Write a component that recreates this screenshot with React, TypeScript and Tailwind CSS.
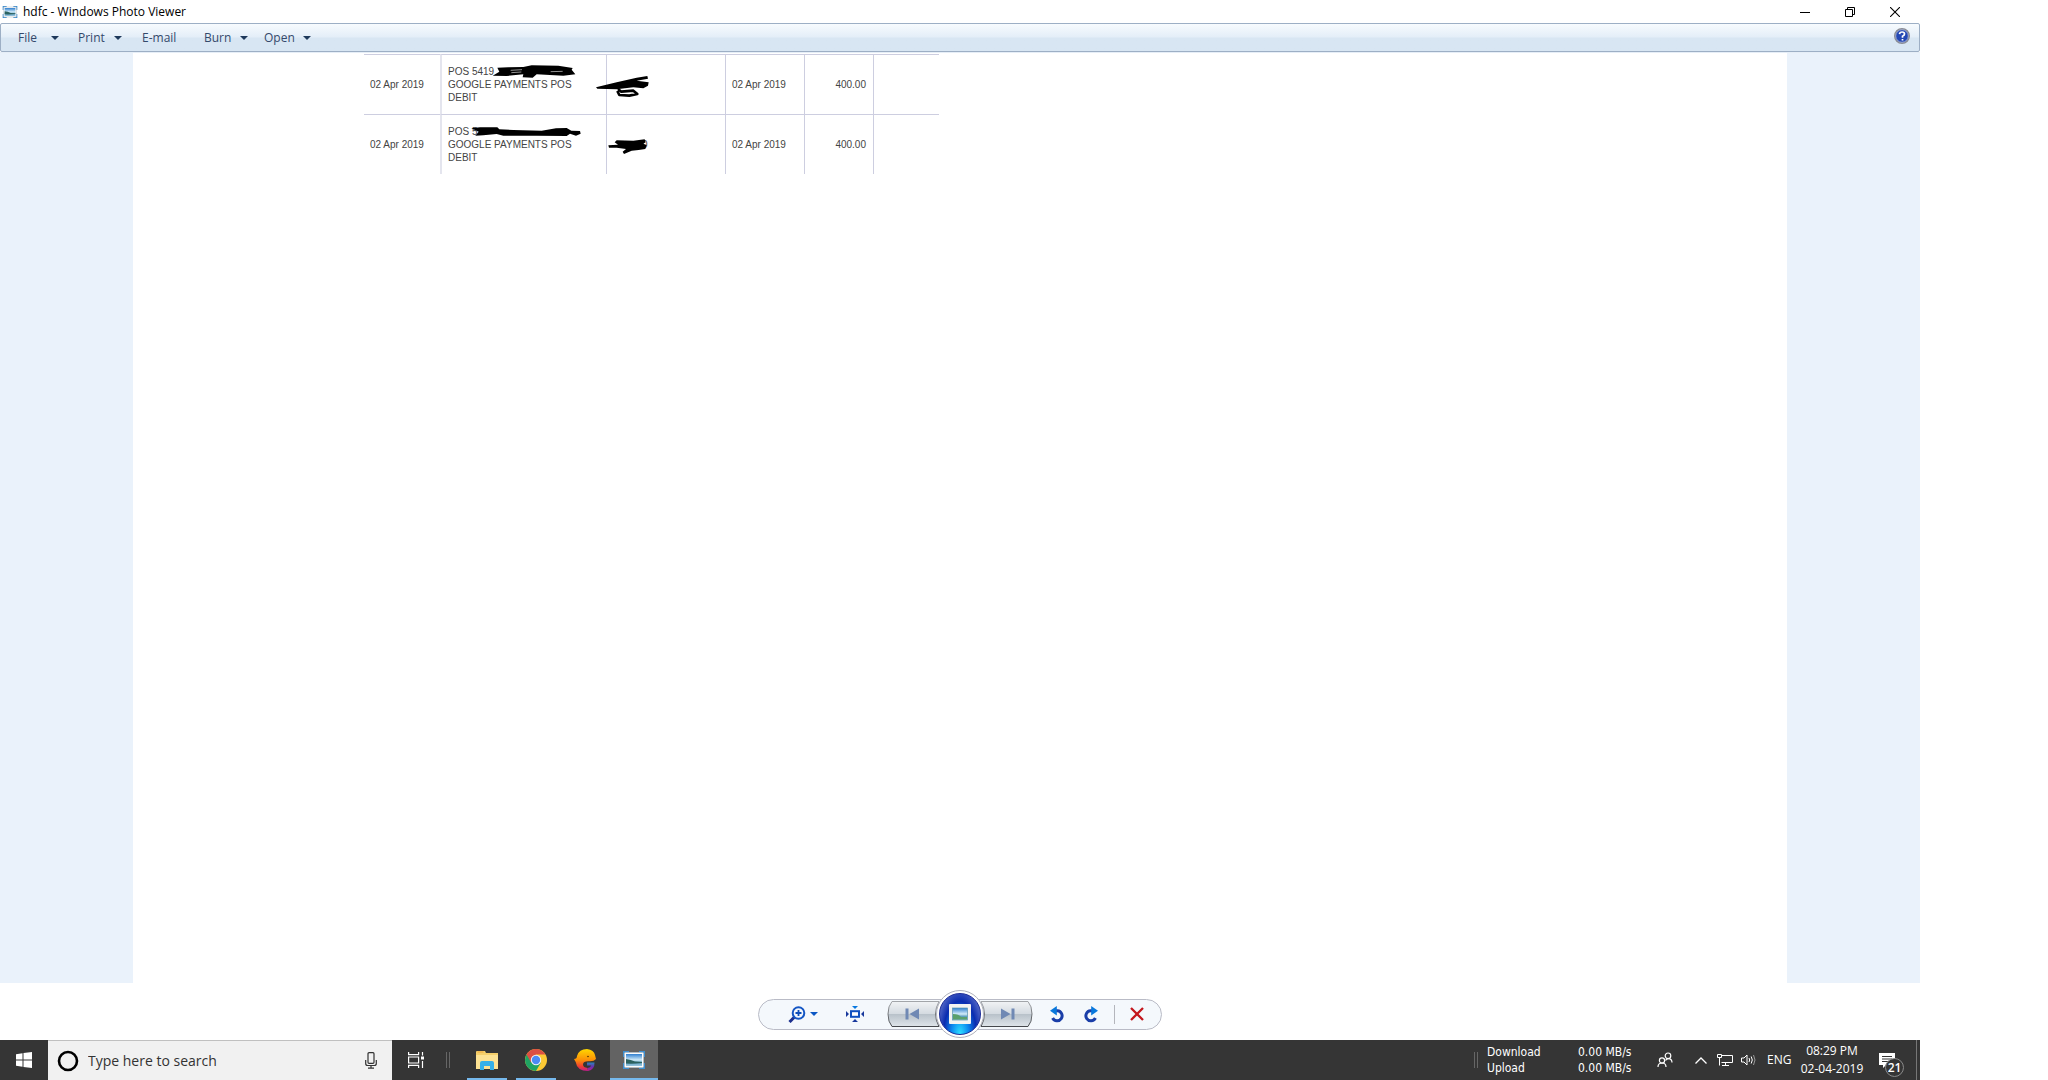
import type { ReactNode } from "react";

const ROWS = [
  {
    id: 1,
    card: "POS 5419",
    amount: "",
    cardMark: (
      <>
        <path d="M442 68 L475 67 L520 66 L545 61 L625 62 L668 69 L665 74 L676 88 L640 92 L560 88 L548 98 L518 97 L520 88 L470 93 L428 92 L448 80 Z" />
        <path d="M482 76 L516 74 M484 83 L514 81 M602 80 L638 79" stroke="#ddd" strokeWidth="2" />
      </>
    ),
    amountMark: (
      <>
        <path d="M738 127 L800 112 L860 98 L892 93 L894 101 L860 107 L896 112 L894 122 L880 130 L850 127 L800 133 L742 131 Z" />
        <path d="M804 132 L814 140 L850 137 L862 147 L838 152 L808 150 L802 138" fill="none" stroke="#000" strokeWidth="8" strokeLinejoin="round" />
      </>
    ),
  },
  {
    id: 2,
    card: "POS 5",
    amount: "0",
    cardMark: (
      <path d="M364 250 L390 247 L442 247 L448 253 L490 255 L575 257 L618 250 L650 249 L664 257 L690 258 L692 266 L678 272 L660 266 L650 273 L560 272 L460 272 L440 267 L400 271 L376 272 L386 260 Z" />
    ),
    amountMark: (
      <path d="M775 301 L804 299 L794 292 L800 286 L850 287 L884 283 L887 292 L880 296 L890 300 L886 312 L866 315 L845 317 L822 327 L818 320 L828 312 L800 308 L777 308 Z" />
    ),
  },
];

function PhotoIcon({ className }: { className: string }) {
  return (
    <svg viewBox="0 0 24 20" className={className} aria-hidden="true">
      <defs>
        <linearGradient id="sky" x1="0" y1="0" x2="0" y2="1">
          <stop offset="0" stopColor="#2f7fd0" />
          <stop offset=".5" stopColor="#d3ecf8" />
          <stop offset=".7" stopColor="#5c9fc0" />
          <stop offset="1" stopColor="#9ac6e0" />
        </linearGradient>
      </defs>
      <path d="M1 1h6v4H5v2H1zM23 1h-6v4h2v2h4zM1 19h6v-4H5v-2H1zM23 19h-6v-4h2v-2h4z" fill="#3f8fd0" />
      <rect x="2.500" y="2.500" width="19" height="15" rx="1" fill="#fbfbfb" stroke="#b4bcc4" strokeWidth=".8" />
      <rect x="4" y="4" width="16" height="12" fill="url(#sky)" />
      <path d="M4 9q5 .5 9 2.500l7 .5v1q-9 1-16 .5z" fill="#2c6260" />
    </svg>
  );
}

function Caret({ color }: { color: string }) {
  return (
    <svg viewBox="0 0 8 4" className="h-1 w-2 shrink-0" aria-hidden="true">
      <path d="M0 0h8L4 4z" fill={color} />
    </svg>
  );
}

function TitleBar() {
  return (
    <header className="flex h-[23px] items-center pl-0.5 text-black">
      <PhotoIcon className="h-[14px] w-4" />
      <h1 className="ml-[5px] grow text-[12px]">hdfc - Windows Photo Viewer</h1>
      <button aria-label="Minimize" className="flex h-5 w-[45px] items-center justify-center">
        <svg viewBox="0 0 10 10" className="size-[10px]"><path d="M0 5.500h10" stroke="#000" /></svg>
      </button>
      <button aria-label="Restore" className="flex h-5 w-[45px] items-center justify-center">
        <svg viewBox="0 0 10 10" className="size-[10px]" fill="none" stroke="#000"><path d="M.5 2.500h7v7h-7zM2.500 2.500v-2h7v7h-2" /></svg>
      </button>
      <button aria-label="Close" className="mr-0.5 flex h-5 w-[46px] items-center justify-center">
        <svg viewBox="0 0 10 10" className="size-[10px]"><path d="M0 0l10 10M10 0L0 10" stroke="#000" strokeWidth="1.100" /></svg>
      </button>
    </header>
  );
}

function MenuButton({ label, caret = true, className }: { label: string; caret?: boolean; className: string }) {
  return (
    <button className={"flex items-center justify-between whitespace-nowrap " + className}>
      {label}
      {caret && <Caret color="#1e395b" />}
    </button>
  );
}

function MenuBar() {
  return (
    <nav className="flex h-[29px] items-center rounded-[2px] border border-[#9dafc5] bg-linear-to-b from-[#f7fbfe] from-0% via-[#e4eef8] via-48% to-[#d8e6f3] to-52% pl-[17px] text-[12px] text-[#34496b]">
      <MenuButton label="File" className="mr-[19px] w-[41px]" />
      <MenuButton label="Print" className="mr-5 w-[44px]" />
      <MenuButton label="E-mail" caret={false} className="mr-[22px] w-10" />
      <MenuButton label="Burn" className="mr-4 w-[44px]" />
      <MenuButton label="Open" className="w-[47px]" />
      <button aria-label="Help" className="mr-[9px] mb-1 ml-auto">
        <svg viewBox="0 0 16 16" className="size-4">
          <circle cx="8" cy="8" r="7.300" fill="#2448b4" stroke="#8b8d94" strokeWidth="1.400" />
          <circle cx="8" cy="8" r="6.300" fill="none" stroke="#c9cede" strokeWidth=".7" />
          <path d="M5.500 6.200Q5.700 4 8.100 4q2.400 0 2.400 2Q10.500 7.300 8.500 8.200V9.700M8.500 11v1.600" fill="none" stroke="#fff" strokeWidth="1.700" />
        </svg>
      </button>
    </nav>
  );
}

function Cell({ className = "", children }: { className?: string; children?: ReactNode }) {
  return <td className={"relative h-[60px] border-t border-[#cdcee0] pr-[7px] pl-[6px] py-0 align-middle " + className}>{children}</td>;
}

function Statement() {
  return (
    <table className="mt-px ml-[231px] w-[575px] table-fixed border-separate border-spacing-0 font-['Liberation_Sans',sans-serif] text-[10px] leading-[13px] text-[#444]">
      <colgroup>
        <col className="w-[76px]" />
        <col className="w-[166px]" />
        <col className="w-[119px]" />
        <col className="w-[79px]" />
        <col className="w-[69px]" />
        <col className="w-[66px]" />
      </colgroup>
      <tbody>
        {ROWS.map((row) => (
          <tr key={row.id}>
            <Cell>02 Apr 2019</Cell>
            <Cell className="border-l-2 border-l-[#e4e5ee]">
              {row.card}
              <br />
              GOOGLE PAYMENTS POS
              <br />
              DEBIT
              <svg viewBox={row.id === 1 ? "276 30 492 177" : "276 210 492 177"} className="absolute inset-0 h-[59px] w-[164px]" aria-hidden="true">
                {row.cardMark}
              </svg>
            </Cell>
            <Cell className="border-l">
              <span className="ml-[29px]">{row.amount}</span>
              <svg viewBox={row.id === 1 ? "771 30 354 177" : "771 210 354 177"} className="absolute inset-0 h-[59px] w-[118px] overflow-visible" aria-hidden="true">
                {row.amountMark}
              </svg>
            </Cell>
            <Cell className="border-l">02 Apr 2019</Cell>
            <Cell className="border-l text-right">400.00</Cell>
            <Cell className="border-l" />
          </tr>
        ))}
      </tbody>
    </table>
  );
}

function NavShape({ flip }: { flip?: boolean }) {
  return (
    <svg viewBox="0 0 57 26" className={flip ? "h-[26px] w-[57px] -scale-x-100" : "h-[26px] w-[57px]"} aria-hidden="true">
      <defs>
        <linearGradient id="metal" x1="0" y1="0" x2="0" y2="1">
          <stop offset="0" stopColor="#f1f3f5" />
          <stop offset=".48" stopColor="#d5dbe1" />
          <stop offset=".52" stopColor="#b9c2ca" />
          <stop offset="1" stopColor="#dfe5ea" />
        </linearGradient>
        <linearGradient id="edge" x1="0" y1="0" x2="0" y2="1">
          <stop offset="0" stopColor="#a2a5a9" />
          <stop offset="1" stopColor="#45484c" />
        </linearGradient>
      </defs>
      <path d="M5 .5H52Q45 13 52 25.500H5Q1 21 1 13T5 .5Z" fill="url(#metal)" stroke="url(#edge)" />
      <path d="M18.500 7.500h3v11h-3zM32 7.500v11L22.500 13z" fill="#7089b4" />
    </svg>
  );
}

function RotateIcon({ className }: { className: string }) {
  return (
    <svg viewBox="0 0 15 17" className={className} aria-hidden="true">
      <path d="M5.500 4.800H7.500A5 5 0 1 1 2.600 12" fill="none" stroke="#1a3ea8" strokeWidth="3" />
      <path d="M0 4.800L6.800 0v9.600z" fill="#0878dc" />
    </svg>
  );
}

function Controls() {
  return (
    <div className="flex h-[57px] shrink-0 items-center justify-center pt-[5px]">
      <div className="flex h-[31px] w-[404px] items-center rounded-full border border-[#b9bbc6] bg-[#f4f8fc]">
        <div className="flex flex-1 items-center">
          <button aria-label="Change the display size" className="ml-[29px] flex items-center gap-1">
            <svg viewBox="0 0 18 17" className="h-[17px] w-[18px]" fill="none">
              <path d="M6.500 11L1.500 16" stroke="#1b2f8e" strokeWidth="3" />
              <circle cx="10.500" cy="7" r="5.800" fill="#f4f8fc" stroke="#1456c4" strokeWidth="2" />
              <path d="M7.500 7h6M10.500 4v6" stroke="#0d4db8" strokeWidth="1.800" />
            </svg>
            <Caret color="#0b57c4" />
          </button>
          <button aria-label="Actual size" className="ml-[28px]">
            <svg viewBox="0 0 18 16" className="h-4 w-[18px]">
              <rect x="5" y="5.200" width="8" height="5.600" fill="#fff" stroke="#1050c0" strokeWidth="2" />
              <path d="M6 0h6L9 3z" fill="#0878e0" />
              <path d="M6 16h6L9 13zM0 5v6l3-3zM18 5v6l-3-3z" fill="#18389c" />
            </svg>
          </button>
        </div>
        <div className="flex items-center">
          <button aria-label="Previous"><NavShape /></button>
          <button aria-label="Play slide show" className="z-10 -mx-2 flex size-12 items-center justify-center rounded-full border border-[#b0b2bc] bg-white">
            <span className="flex size-[42px] items-center justify-center rounded-full border border-[#1c2c98] bg-[radial-gradient(ellipse_at_50%_100%,#2fe0ff_0%,#0c8af0_30%,#0a2cb0_58%,#7f8cd4_100%)]">
              <svg viewBox="0 0 22 20" className="h-5 w-[22px]">
                <rect width="22" height="20" rx="1" fill="#f3f3f1" />
                <rect x="3.500" y="4" width="15" height="12" fill="url(#sky)" stroke="#5794b0" strokeWidth=".7" />
                <path d="M4 10q6 0 8 3h6v2.500H4z" fill="#5aa06c" />
              </svg>
            </span>
          </button>
          <button aria-label="Next"><NavShape flip /></button>
        </div>
        <div className="flex flex-1 items-center justify-end">
          <button aria-label="Rotate counterclockwise"><RotateIcon className="h-[17px] w-[15px]" /></button>
          <button aria-label="Rotate clockwise" className="ml-[18px]"><RotateIcon className="h-[17px] w-[15px] -scale-x-100" /></button>
          <span className="ml-4 h-[19px] w-px bg-[#b4b6bc]" />
          <button aria-label="Delete" className="mr-[17px] ml-[15px]">
            <svg viewBox="0 0 14 14" className="size-[14px]"><path d="M1 1l12 12M13 1L1 13" stroke="#c4161c" strokeWidth="2.300" /></svg>
          </button>
        </div>
      </div>
    </div>
  );
}

function TaskItem({ label, running, active, children }: { label: string; running?: boolean; active?: boolean; children: ReactNode }) {
  return (
    <button aria-label={label} className={"relative flex h-10 w-12 items-center justify-center " + (active ? "bg-[#636363]" : "")}>
      {children}
      {running && <span className={"absolute bottom-0 h-0.5 bg-[#76b9ed] " + (active ? "inset-x-0" : "inset-x-1")} />}
    </button>
  );
}

function Grip() {
  return <span className="h-4 w-1 border-x border-[#666]" />;
}

function TaskBar() {
  return (
    <footer className="flex h-10 shrink-0 items-center bg-[#353535] text-white">
      <button aria-label="Start" className="flex h-10 w-12 items-center justify-center">
        <svg viewBox="0 0 16 16" className="size-4" fill="#fff"><path d="M0 2.200L6.500 1.300V7.500H0zM7.500 1.100L16 0v7.500H7.500zM0 8.500h6.500v6.200L0 13.800zM7.500 8.500H16V16l-8.500-1.100z" /></svg>
      </button>
      <label className="flex h-10 w-[344px] items-center border-t border-[#c0c0c0] bg-[#f1f1f1] pl-[9px]">
        <svg viewBox="0 0 22 22" className="size-[22px]" aria-hidden="true"><circle cx="11" cy="11" r="9" fill="none" stroke="#000" strokeWidth="2.600" /></svg>
        <input aria-label="Search" placeholder="Type here to search" className="ml-[9px] w-0 grow bg-transparent text-[14px] outline-none placeholder:text-[#333]" />
        <svg viewBox="0 0 12 17" className="mr-[15px] h-[17px] w-3" fill="none" stroke="#333" strokeWidth="1.200" aria-hidden="true">
          <rect x="3" y=".7" width="6" height="10.600" rx="1" />
          <path d="M.7 8v3.500q0 2 2 2h6.600q2 0 2-2V8M6 13.500V16M3 16.200h6" />
        </svg>
      </label>
      <button aria-label="Task View" className="flex h-10 w-12 items-center justify-center">
        <svg viewBox="0 0 16 16" className="size-4" fill="none" stroke="#fff" strokeWidth="1.200"><path d="M.6 0v2.600h10V0M.6 5h10v6H.6zM.6 16v-2.600h10V16M14.500 0v3.500M14.500 9v7" /><path d="M13 4.500h3v3h-3z" fill="#fff" stroke="none" /></svg>
      </button>
      <span className="mr-[13px] ml-[6px] flex"><Grip /></span>
      <div className="flex gap-px">
        <TaskItem label="File Explorer" running>
          <svg viewBox="0 0 22 19" className="h-[19px] w-[22px]">
            <path d="M0 1q0-1 1-1h8l1 2h12v16H0z" fill="#f5cf6b" />
            <path d="M0 4h22v14H0z" fill="#fde293" />
            <path d="M1.500 1h6" stroke="#f0a63a" />
            <path d="M4 19v-7q0-2 2-2h10q2 0 2 2v7h-4v-4H8v4z" fill="#35b0e8" />
          </svg>
        </TaskItem>
        <TaskItem label="Google Chrome" running>
          <svg viewBox="0 0 22 22" className="size-[22px]">
            <circle cx="11" cy="11" r="11" fill="#fcc934" />
            <path d="M11 11L1.500 5.500A11 11 0 0 0 11 22l4.800-8.200z" fill="#1fa463" />
            <path d="M1.500 5.500A11 11 0 0 1 20.500 5.500H11L6.200 13.800z" fill="#db4f43" />
            <circle cx="11" cy="11" r="5.200" fill="#f3f3f3" />
            <circle cx="11" cy="11" r="4.200" fill="#4a8af4" />
          </svg>
        </TaskItem>
        <TaskItem label="Game center">
          <svg viewBox="0 0 22 22" className="size-[22px]">
            <defs>
              <linearGradient id="flame" x1="0" y1="0" x2="0" y2="1">
                <stop offset="0" stopColor="#ffd800" />
                <stop offset=".5" stopColor="#fb8f08" />
                <stop offset=".8" stopColor="#ef3b34" />
                <stop offset="1" stopColor="#c01c8c" />
              </linearGradient>
              <linearGradient id="jaw" x1="0" y1="0" x2="0" y2="1">
                <stop offset="0" stopColor="#2b86b8" />
                <stop offset=".5" stopColor="#6a30b0" />
                <stop offset="1" stopColor="#c01c8c" />
              </linearGradient>
            </defs>
            <path d="M0 10Q3 10 3 7Q5 0 13 0Q20 1 21 6l1 4q-2 2.500-7 2.200Q9 12 9 15.500q0 3 4.500 3.500L14 22Q3 22 1.700 13z" fill="url(#flame)" />
            <path d="M13 13.500h7.500q.3 7-6.500 8.500l-.5-3q3-.2 3.800-2.500H13z" fill="url(#jaw)" />
            <circle cx="14" cy="7.500" r=".8" fill="#4a2b00" />
          </svg>
        </TaskItem>
        <TaskItem label="Windows Photo Viewer" running active>
          <PhotoIcon className="h-5 w-6" />
        </TaskItem>
      </div>
      <div className="ml-auto flex h-10 items-center">
        <Grip />
        <div className="ml-[9px] grid w-[149px] grid-cols-[91px_auto] font-['DejaVu_Sans_Condensed','DejaVu_Sans',sans-serif] text-[12px] leading-4">
          <span>Download</span>
          <span>0.00 MB/s</span>
          <span>Upload</span>
          <span>0.00 MB/s</span>
        </div>
        <button aria-label="People" className="ml-[21px]">
          <svg viewBox="0 0 16 16" className="size-4" fill="none" stroke="#fff" strokeWidth="1.200"><circle cx="11" cy="3.800" r="2.800" /><circle cx="5" cy="8.500" r="2.600" /><path d="M1 15q0-4 4-4t4 4M8.500 8.500q1-2 3-1.900 3.500.2 3.500 4" /></svg>
        </button>
        <button aria-label="Show hidden icons" className="ml-[22px]">
          <svg viewBox="0 0 12 7" className="h-[7px] w-3" fill="none" stroke="#fff" strokeWidth="1.300"><path d="M.5 6.500L6 1l5.500 5.500" /></svg>
        </button>
        <button aria-label="Network" className="ml-[10px]">
          <svg viewBox="0 0 16 14" className="h-[14px] w-4" fill="none" stroke="#fff"><path d="M4.500 2.500h11v7h-11M8.500 9.500v3M5 12.500h7M.5 1.500h4v3h-4zM2.500 4.500v8" /></svg>
        </button>
        <button aria-label="Volume" className="ml-2">
          <svg viewBox="0 0 16 14" className="h-[14px] w-4" fill="none" stroke="#fff"><path d="M.5 5h2.500l3-3v10l-3-3H.5zM8 5q1.300 2 0 4M10.200 3.500q2.200 3.500 0 7" /><path d="M12.500 2q3 5 0 10" stroke="#999" /></svg>
        </button>
        <button aria-label="Language" className="ml-[10px] w-[24px] text-[12px]">ENG</button>
        <button aria-label="Date and time" className="ml-[9px] w-[64px] text-[12px] leading-[18px]">
          08:29 PM
          <br />
          02-04-2019
        </button>
        <button aria-label="21 notifications" className="relative ml-[15px] flex h-10 w-[37px] items-center">
          <svg viewBox="0 0 16 15" className="h-[15px] w-4"><path d="M0 0h16v12H7l-3 3v-3H0z" fill="#fff" /><path d="M3 3.500h10M3 6h10M3 8.500h7" stroke="#353535" /></svg>
          <span className="absolute top-[18px] left-[6px] flex size-[19px] items-center justify-center rounded-full border border-[#8a8a8a] bg-[#353535] text-[12px] font-semibold">21</span>
        </button>
        <button aria-label="Show desktop" className="h-10 w-1 border-l border-[#777]" />
      </div>
    </footer>
  );
}

export default function App() {
  return (
    <div className="min-h-screen bg-white pr-32 font-['Open_Sans','Noto_Sans',sans-serif]">
      <div className="flex min-h-screen flex-col">
        <TitleBar />
        <MenuBar />
        <main className="flex grow border-t border-[#e6eef7] bg-[#eaf2fb] px-[133px]">
          <section aria-label="hdfc" className="grow bg-white">
            <Statement />
          </section>
        </main>
        <Controls />
        <TaskBar />
      </div>
    </div>
  );
}
